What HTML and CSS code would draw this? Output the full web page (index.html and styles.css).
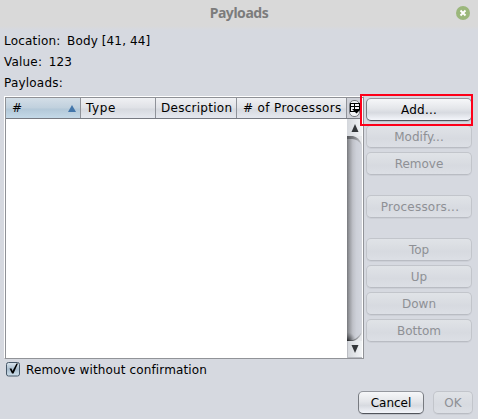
FILE: index.html
```html
<!DOCTYPE html>
<html lang="en">
<head>
<meta charset="utf-8">
<title>Payloads</title>
<link rel="stylesheet" href="styles.css">
</head>
<body>
<div class="dialog">
  <header class="titlebar">
    <h1>Payloads</h1>
    <svg class="close" width="14" height="14" viewBox="0 0 14 14"><circle cx="7" cy="7" r="7" fill="#9bb77b"/><path d="M4.5 4.5l5 5M9.5 4.5l-5 5" stroke="#fff" stroke-width="1.9"/></svg>
  </header>
  <div class="info">
    <p><span>Location:</span><span>Body [41, 44]</span></p>
    <p><span>Value:</span><span>123</span></p>
    <p><span>Payloads:</span></p>
  </div>
  <main class="content">
    <section class="table">
      <div class="head">
        <div class="th sorted"><span>#</span><svg width="8" height="7" viewBox="0 0 8 7"><path d="M4 0L8 7H0z" fill="#4376aa"/></svg></div>
        <div class="th type">Type</div>
        <div class="th">Description</div>
        <div class="th processors">#&nbsp;of&nbsp;Processors</div>
        <div class="control"><svg width="13" height="20" viewBox="0 0 13 20"><rect x="1.500" y="2.500" width="10" height="16" rx="4.5" fill="#f1f2f5" stroke="#777a80"/><path d="M2 5.500h10M2.500 5v9M11.500 5.500v6M2 13.500h5M2 8.500h10M6.500 5.500v8" fill="none" stroke="#000"/><path d="M4 11h9L8.500 15.500z" fill="#000"/></svg></div>
      </div>
      <div class="view">
        <div class="rows"></div>
        <div class="scroll">
          <div class="arrow up"><svg width="8" height="8" viewBox="0 0 8 8"><path d="M4 0L7.500 8H.5z" fill="#333639"/></svg></div>
          <div class="track"><svg width="15" height="205" viewBox="0 0 15 205">
            <defs>
              <linearGradient id="side"><stop offset="0" stop-color="#77797d"/><stop offset=".15" stop-color="#96989d"/><stop offset=".4" stop-color="#bfc1c8"/><stop offset=".65" stop-color="#cdd0d8"/><stop offset="1" stop-color="#d2d5dd"/></linearGradient>
              <linearGradient id="cap"><stop offset="0" stop-color="#55575b"/><stop offset=".5" stop-color="#808286"/><stop offset="1" stop-color="#c2c4c9"/></linearGradient>
              <radialGradient id="edge" gradientUnits="userSpaceOnUse" cx="0" cy="205" r="9"><stop offset="0" stop-color="#202225"/><stop offset="1" stop-color="#606266" stop-opacity="0"/></radialGradient>
            </defs>
            <path d="M0 0H6Q12 1 14.500 8V198Q11 204 6 205H0z" fill="url(#cap)"/>
            <path d="M0 3H5Q11 3 14.500 9V196Q11 202 6 204H0z" fill="url(#side)"/>
            <path d="M0 196H9V204L6 205H0z" fill="url(#edge)"/>
          </svg></div>
          <div class="arrow down"><svg width="8" height="8" viewBox="0 0 8 8"><path d="M4 8L7.500 0H.5z" fill="#333639"/></svg></div>
        </div>
      </div>
    </section>
    <aside class="actions">
      <button class="btn add">Add...</button>
      <button class="btn" disabled>Modify...</button>
      <button class="btn" disabled>Remove</button>
      <button class="btn wide gap" disabled>Processors...</button>
      <button class="btn gap" disabled>Top</button>
      <button class="btn" disabled>Up</button>
      <button class="btn" disabled>Down</button>
      <button class="btn" disabled>Bottom</button>
      <div class="highlight"></div>
    </aside>
  </main>
  <div class="option">
    <svg width="14" height="15" viewBox="0 0 14 15"><defs><linearGradient id="box" x2="0" y2="1"><stop offset="0" stop-color="#dce6ee"/><stop offset=".5" stop-color="#a8bccd"/><stop offset="1" stop-color="#cfe0ec"/></linearGradient></defs><rect x=".5" y=".5" width="13" height="13.500" rx="2" fill="url(#box)" stroke="#475869"/><path d="M3.500 6.500h2l1 2.500L10.500 1.500h1.500L7.500 11.500H6z" fill="#000"/></svg>
    <span>Remove without confirmation</span>
  </div>
  <footer class="footer">
    <button class="btn cancel">Cancel</button>
    <button class="btn ok" disabled>OK</button>
  </footer>
</div>
</body>
</html>
```

FILE: styles.css
```css
* { box-sizing: border-box; }
body { margin: 0; }
.dialog {
  width: 478px;
  height: 419px;
  overflow: hidden;
  background: #d6d9e0;
  color: #000;
  font: 12px/21px "DejaVu Sans", sans-serif;
}
.titlebar {
  height: 30px;
  display: grid;
  grid-template-columns: 1fr auto 1fr;
  align-items: center;
  background: linear-gradient(#d9d9d9 26px, #d6d9e0);
}
.titlebar h1 {
  grid-column: 2;
  margin: -4px 0 0;
  font: bold 14px/26px "Noto Sans", sans-serif;
  letter-spacing: -.45px;
  color: #7c7c7c;
}
.close { justify-self: end; margin: -4px 8px 0 0; }
.info { height: 66px; padding: 1px 0 0 4px; letter-spacing: .2px; }
.info p { display: flex; gap: 6.5px; margin: 0; }
.info p span + span { letter-spacing: .12px; }
.content { display: flex; height: 263px; padding-left: 4px; }
.table {
  width: 360px;
  height: 263px;
  display: flex;
  flex-direction: column;
  padding: 1px 1px 0;
  border: 1px solid #919398;
  border-left-color: #fff;
  border-top-color: #fff;
  box-shadow: inset 1px 1px #8f9196, inset -1px 0 #fff;
}
.head {
  height: 21px;
  display: grid;
  grid-template-columns: 75px 75px 81px 110px 1fr;
  border-bottom: 1px solid #777a82;
  background: linear-gradient(#f0f1f4, #dfe1e6 50%, #d6d9df 55%, #e5e8ef);
  letter-spacing: .27px;
}
.th {
  display: flex;
  justify-content: space-between;
  align-items: center;
  padding: 0 0 0 5px;
  border-right: 1px solid #8f9299;
  line-height: 20px;
  white-space: nowrap;
}
.type { letter-spacing: .6px; }
.processors { padding-left: 6px; letter-spacing: .36px; }
.sorted {
  padding: 0 4px 0 6px;
  background: linear-gradient(#d3dee7, #c0d0dd 50%, #b3c8d8 55%, #c4d9e8);
}
.control { display: flex; justify-content: center; background: #cfd1d8; }
.view { flex: 1; display: flex; background: #fff; }
.rows { width: 341px; }
.scroll { width: 15px; display: flex; flex-direction: column; background: #e6e8eb; }
.arrow { height: 17px; display: flex; justify-content: center; align-items: center; background: linear-gradient(90deg, #d4d7dc, #f2f4f6); }
.arrow.down { flex: 1; border-left: 1px solid #bbbdc3; border-bottom: 1px solid #b8bbc1; }
.track { height: 205px; }
.track svg { display: block; }
.actions { position: relative; width: 108px; padding: 2px 0 0 2px; display: flex; flex-direction: column; gap: 4px; }
.btn {
  width: 106px;
  height: 23px;
  flex: none;
  margin: 0;
  padding: 2px 0 0;
  border: 1px solid #777a80;
  border-top-color: #94979e;
  border-bottom-color: #51545b;
  border-radius: 5px;
  background: linear-gradient(#f6f7f9, #e4e6ea 45%, #d7dae0 65%, #f4f6fb);
  box-shadow: 0 1px #bfc2c9;
  color: #000;
  font: 12px/19px "DejaVu Sans", sans-serif;
}
.btn:disabled {
  color: #8e9095;
  border-color: #c2c5cb;
  border-bottom-color: #b9bcc3;
  background: linear-gradient(#e0e3e7, #d7dae0 60%, #dcdfe5);
  box-shadow: 0 1px #cccfd6;
}
.add { letter-spacing: .2px; }
.wide { padding-left: 2px; letter-spacing: .22px; }
.gap { margin-top: 16px; }
.highlight {
  position: absolute;
  left: -4px;
  top: -2px;
  width: 113px;
  height: 32px;
  border: 2px solid #fe0019;
}
.option { height: 32px; display: flex; align-items: flex-start; gap: 6px; padding: 3px 0 0 6px; }
.option span { padding-top: 1px; line-height: 15px; letter-spacing: .14px; }
.footer { display: flex; justify-content: flex-end; gap: 9px; padding-right: 5px; }
.cancel { width: 66px; }
.ok { width: 40px; }
```
